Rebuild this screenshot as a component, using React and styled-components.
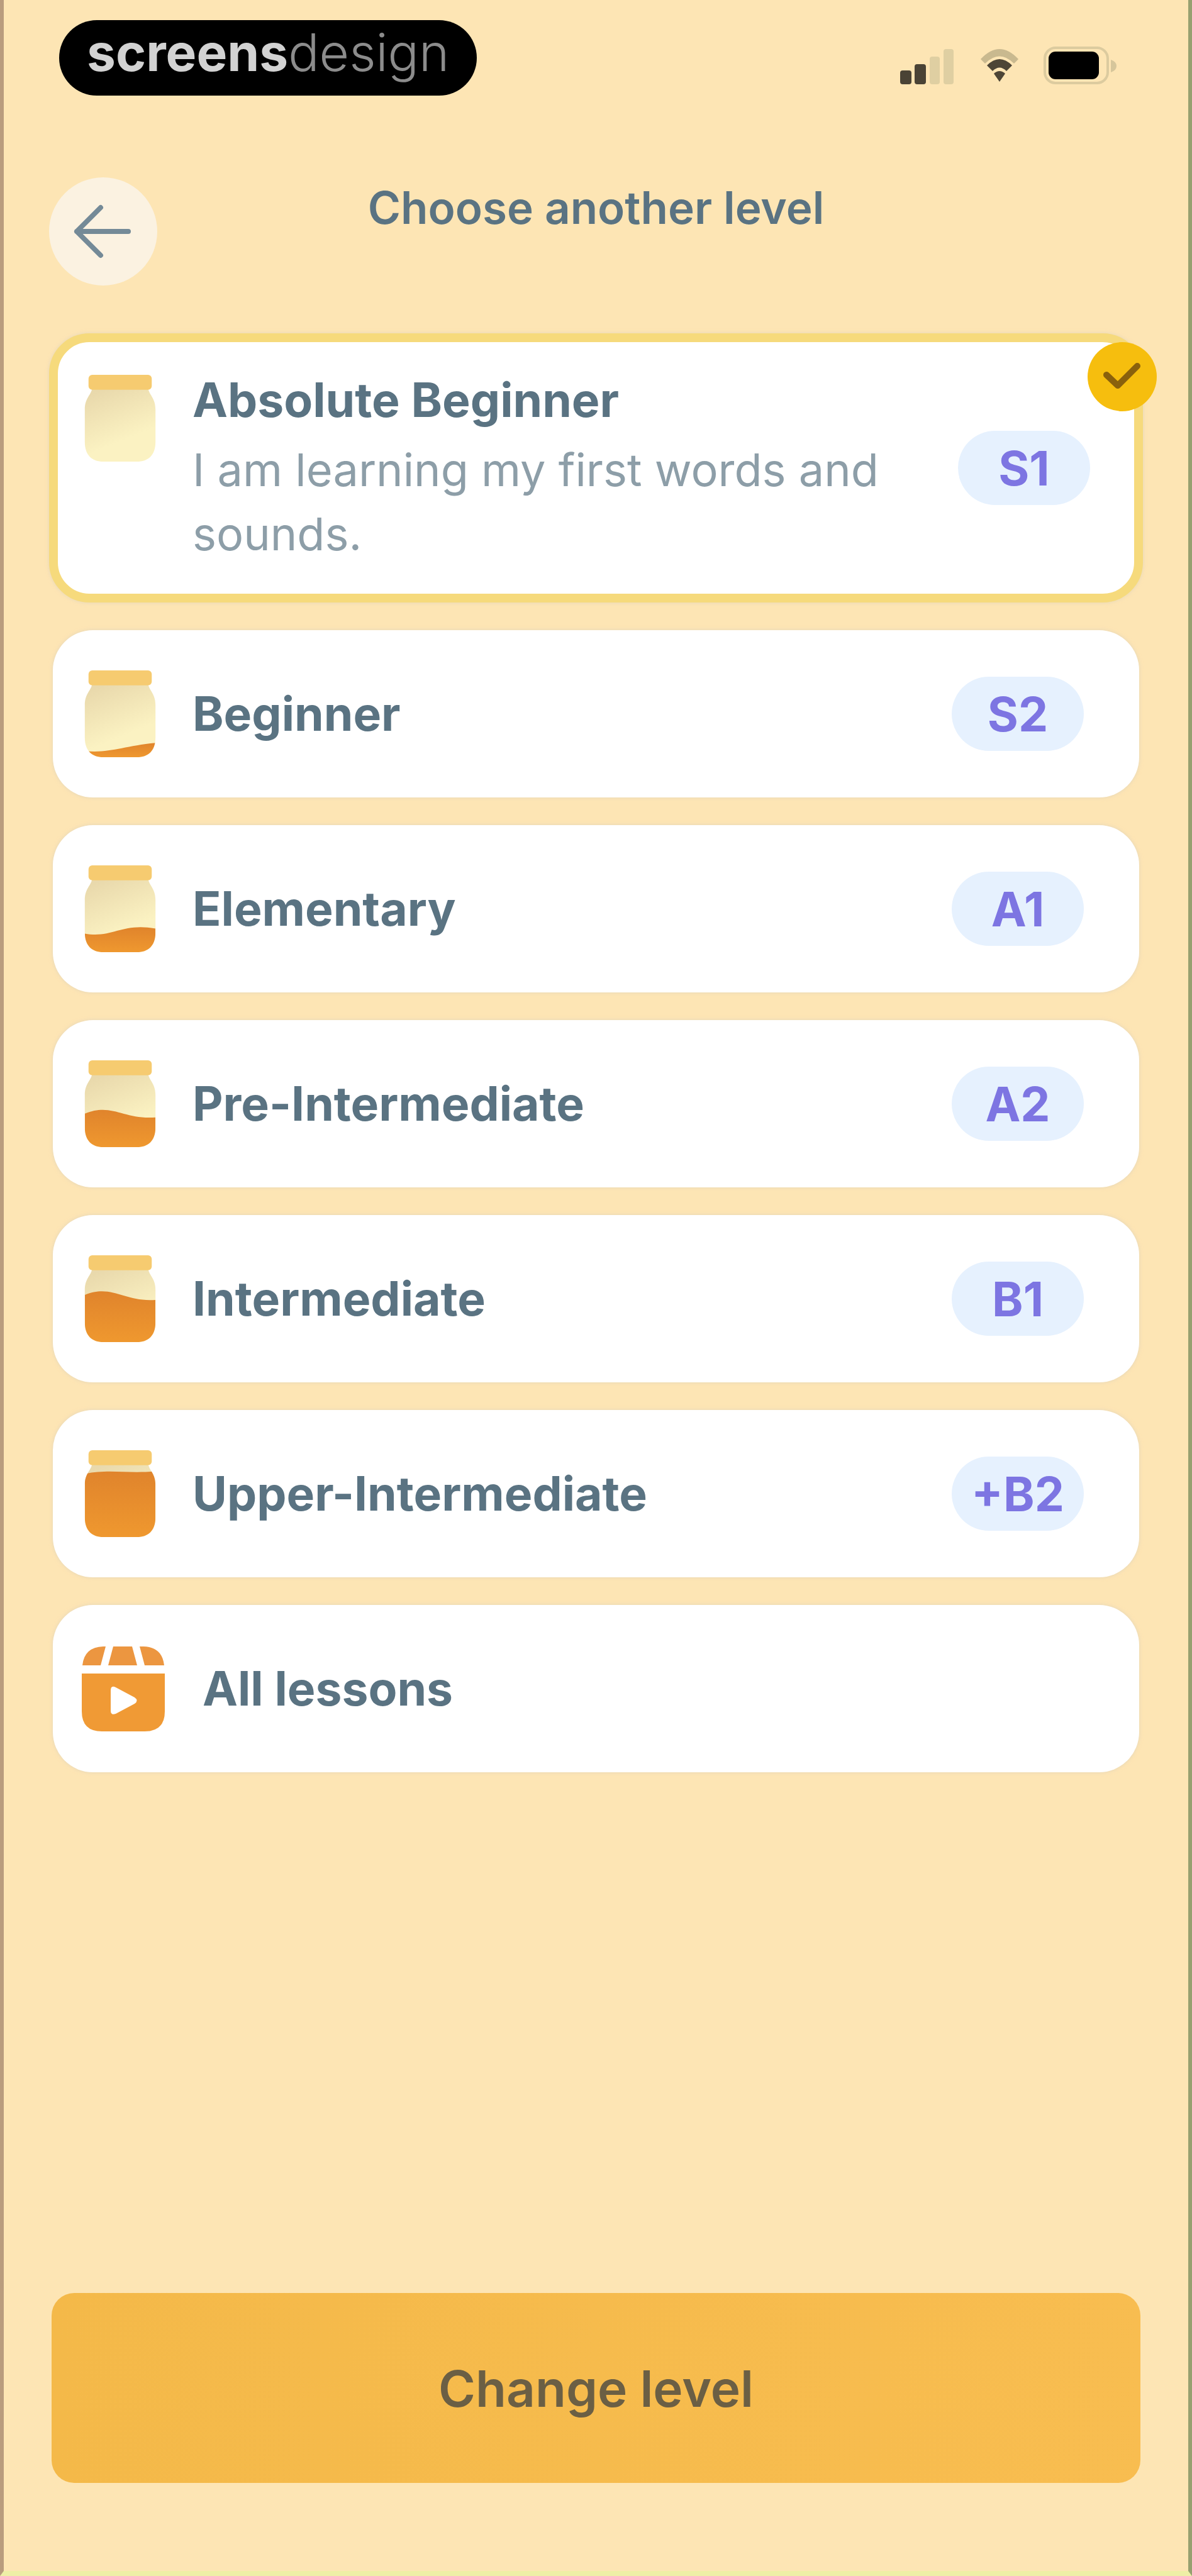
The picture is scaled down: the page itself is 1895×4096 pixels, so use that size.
import { useState } from 'react'
import styled, { createGlobalStyle } from 'styled-components'

const GlobalStyle = createGlobalStyle`
  *,
  *::before,
  *::after {
    box-sizing: border-box;
  }

  body {
    margin: 0;
    background: #fde5b4;
    color: #5a7382;
    font-family: Inter, "Liberation Sans", sans-serif;
  }

  button {
    font-family: inherit;
    cursor: pointer;
  }
`

const Screen = styled.div`
  display: flex;
  flex-direction: column;
  min-height: 100vh;
  background: #fde5b4;
  border-left: 6px solid #b99c7e;
  border-right: 6px solid #97a070;
  border-bottom: 8px solid #eeefa6;
`

const StatusBar = styled.div`
  display: flex;
  align-items: flex-start;
  justify-content: space-between;
  padding: 32px 112px 0 88px;
`

const Brand = styled.div`
  height: 120px;
  padding: 0 44px;
  border-radius: 60px;
  background: #000;
  color: #d2d2d2;
  font-size: 82px;
  font-weight: 700;
  line-height: 104px;

  span {
    color: #8c8c8c;
    font-weight: 300;
  }
`

const StatusIcons = styled.div`
  display: flex;
  gap: 38px;
  padding-top: 42px;
`

const Header = styled.header`
  display: grid;
  grid-template-columns: 172px 1fr 172px;
  align-items: start;
  padding: 130px 72px 0;
`

const BackButton = styled.button`
  display: flex;
  align-items: center;
  justify-content: center;
  width: 172px;
  height: 172px;
  padding: 0;
  border: none;
  border-radius: 50%;
  background: #fbf2e1;
  color: #748a97;
`

const Title = styled.h1`
  margin: 0;
  font-size: 71px;
  font-weight: 600;
  line-height: 96px;
  text-align: center;
`

const LevelList = styled.div`
  display: flex;
  flex-direction: column;
  gap: 44px;
  padding: 76px 76px 0;
`

const LevelCard = styled.label`
  position: relative;
  display: flex;
  align-items: ${props => (props.$selected ? 'stretch' : 'center')};
  gap: 58px;
  min-height: 266px;
  margin: ${props => (props.$selected ? '0 -4px' : '0 2px')};
  padding: ${props => (props.$selected ? '44px 70px 44px 42px' : '0 88px 0 50px')};
  padding-left: ${props => props.$wideIcon && '44px'};
  border: ${props => (props.$selected ? '14px solid #f6da7c' : 'none')};
  border-radius: 64px;
  background: #fff;
  box-shadow: 0 0 6px rgba(214, 205, 190, 0.6);
  cursor: pointer;
`

const HiddenRadio = styled.input`
  position: absolute;
  opacity: 0;
  pointer-events: none;
`

const IconSlot = styled.div`
  display: flex;
  padding-top: ${props => (props.$selected ? '8px' : '0')};
`

const LevelText = styled.div`
  flex: 1;
`

const LevelName = styled.div`
  font-size: 75px;
  font-weight: 700;
  line-height: 96px;
`

const LevelDescription = styled.div`
  padding-top: 12px;
  color: #8d9ea8;
  font-size: 72px;
  font-weight: 400;
  line-height: 102px;
`

const CodeBadge = styled.span`
  display: flex;
  align-items: center;
  justify-content: center;
  align-self: center;
  width: 210px;
  height: 118px;
  border-radius: 59px;
  background: #e6f1fe;
  color: #7d75e2;
  font-size: 75px;
  font-weight: 700;
`

const SelectedMark = styled.span`
  position: absolute;
  top: 0;
  right: -36px;
  display: flex;
  align-items: center;
  justify-content: center;
  width: 110px;
  height: 110px;
  border-radius: 50%;
  background: #f6be0e;
`

const Footer = styled.footer`
  margin-top: auto;
  padding: 0 76px 140px;
`

const ChangeButton = styled.button`
  width: 100%;
  height: 302px;
  border: none;
  border-radius: 36px;
  background: linear-gradient(90deg, #f4b949, #f8bd50);
  color: #6b5f44;
  font-size: 80px;
  font-weight: 600;
`

const levels = [
  { id: 'absolute-beginner', name: 'Absolute Beginner', code: 'S1', fill: 0, description: 'I am learning my first words and sounds.' },
  { id: 'beginner', name: 'Beginner', code: 'S2', fill: 1 },
  { id: 'elementary', name: 'Elementary', code: 'A1', fill: 2 },
  { id: 'pre-intermediate', name: 'Pre-Intermediate', code: 'A2', fill: 3 },
  { id: 'intermediate', name: 'Intermediate', code: 'B1', fill: 4 },
  { id: 'upper-intermediate', name: 'Upper-Intermediate', code: '+B2', fill: 5 },
  { id: 'all', name: 'All lessons' }
]

// surface of the honey, from an empty jar to a full one
const honeyPaths = [
  null,
  'M0 130 C40 134 62 122 114 117 V140 H0 Z',
  'M0 110 C44 118 60 92 114 102 V140 H0 Z',
  'M0 86 C44 68 62 96 114 92 V140 H0 Z',
  'M0 64 C44 46 64 76 114 72 V140 H0 Z',
  'M0 38 C40 30 66 38 114 34 V140 H0 Z'
]

const JAR_BODY = 'M12 22 H102 C105 34 114 38 114 56 V108 C114 130 102 140 84 140 H30 C12 140 0 130 0 108 V56 C0 38 9 34 12 22 Z'

const Jar = ({ fill }) => (
  <svg width='114' height='138' viewBox='0 0 114 140' aria-hidden='true'>
    <defs>
      <linearGradient id={`glass-${fill}`} x1='0' y1='0' x2='0.4' y2='1'>
        <stop offset='0.1' stopColor='#e9d9ac' />
        <stop offset='0.8' stopColor='#fbf2c2' />
      </linearGradient>
      <linearGradient id={`honey-${fill}`} x1='0' y1='0' x2='0' y2='1'>
        <stop offset='0' stopColor='#e0842c' />
        <stop offset='1' stopColor='#ef982f' />
      </linearGradient>
      <clipPath id={`jar-${fill}`}>
        <path d={JAR_BODY} />
      </clipPath>
    </defs>
    <path d={JAR_BODY} fill={`url(#glass-${fill})`} />
    {honeyPaths[fill] && <path d={honeyPaths[fill]} fill={`url(#honey-${fill})`} clipPath={`url(#jar-${fill})`} />}
    <rect x='6' y='0' width='102' height='24' rx='6' fill='#f6cb70' />
  </svg>
)

const LessonsIcon = () => (
  <svg width='136' height='140' viewBox='0 0 136 140' aria-hidden='true'>
    <path d='M2 46 H134 V106 Q134 138 102 138 H34 Q2 138 2 106 Z' fill='#f09a35' />
    <path d='M3 33 Q6 4 36 3 H40 L32 33 Z M52 3 H82 L90 33 H44 Z M94 3 H100 Q130 4 133 33 H102 Z' fill='#ec9640' />
    <path d='M48 73 Q48 64 56 68 L86 84 Q93 89 86 94 L56 110 Q48 113 48 105 Z' fill='#fff' />
  </svg>
)

const SignalIcon = () => (
  <svg width='90' height='62' viewBox='0 0 90 62' aria-hidden='true'>
    <rect x='2' y='38' width='18' height='22' rx='4' fill='#4a4335' />
    <rect x='25' y='28' width='18' height='32' rx='4' fill='#4a4335' />
    <rect x='49' y='16' width='16' height='44' rx='4' fill='#dfcfa2' />
    <rect x='71' y='4' width='16' height='56' rx='4' fill='#dfcfa2' />
  </svg>
)

const WifiIcon = () => (
  <svg width='64' height='62' viewBox='0 0 64 62' aria-hidden='true'>
    <path d='M2 20 Q32 -12 62 20 L55 27 Q32 4 9 27 Z' fill='#c9b98f' />
    <path d='M12 30 Q32 10 52 30 L43 39 Q32 28 21 39 Z' fill='#4d4536' />
    <path d='M23 43 Q32 35 41 43 L32 56 Z' fill='#4d4536' />
  </svg>
)

const BatteryIcon = () => (
  <svg width='118' height='62' viewBox='0 0 118 62' aria-hidden='true'>
    <rect x='2' y='2' width='100' height='56' rx='17' fill='none' stroke='#dccb9f' strokeWidth='4' />
    <rect x='8' y='8' width='80' height='44' rx='11' fill='#000' />
    <path d='M107 21 Q116 24 116 31 Q116 38 107 41 Z' fill='#d6c69b' />
  </svg>
)

const BackIcon = () => (
  <svg width='96' height='96' viewBox='0 0 96 96' fill='none' stroke='currentColor' strokeWidth='8' strokeLinecap='round' strokeLinejoin='round' aria-hidden='true'>
    <path d='M88 48 H6 M44 10 L6 48 L44 86' />
  </svg>
)

const CheckIcon = () => (
  <svg width='64' height='52' viewBox='0 0 64 52' fill='none' stroke='#8a610c' strokeWidth='10' strokeLinecap='round' strokeLinejoin='round' aria-hidden='true'>
    <path d='M7 23 L25 40 L56 9' />
  </svg>
)

const LevelOption = ({ level, selected, onSelect }) => {
  const { id, name, code, fill, description } = level

  return (
    <LevelCard $selected={selected} $wideIcon={!code}>
      <HiddenRadio type='radio' name='level' value={id} checked={selected} onChange={() => onSelect(id)} />
      <IconSlot $selected={selected}>
        {code ? <Jar fill={fill} /> : <LessonsIcon />}
      </IconSlot>
      <LevelText>
        <LevelName>{name}</LevelName>
        {selected && description && <LevelDescription>{description}</LevelDescription>}
      </LevelText>
      {code && <CodeBadge>{code}</CodeBadge>}
      {selected && <SelectedMark><CheckIcon /></SelectedMark>}
    </LevelCard>
  )
}

const App = () => {
  const [selectedId, setSelectedId] = useState('absolute-beginner')

  return (
    <>
      <GlobalStyle />
      <Screen>
        <StatusBar>
          <Brand>screens<span>design</span></Brand>
          <StatusIcons>
            <SignalIcon />
            <WifiIcon />
            <BatteryIcon />
          </StatusIcons>
        </StatusBar>
        <Header>
          <BackButton aria-label='Back'><BackIcon /></BackButton>
          <Title>Choose another level</Title>
        </Header>
        <LevelList role='radiogroup' aria-label='Level'>
          {levels.map(level => (
            <LevelOption key={level.id} level={level} selected={level.id === selectedId} onSelect={setSelectedId} />
          ))}
        </LevelList>
        <Footer>
          <ChangeButton>Change level</ChangeButton>
        </Footer>
      </Screen>
    </>
  )
}

export default App
